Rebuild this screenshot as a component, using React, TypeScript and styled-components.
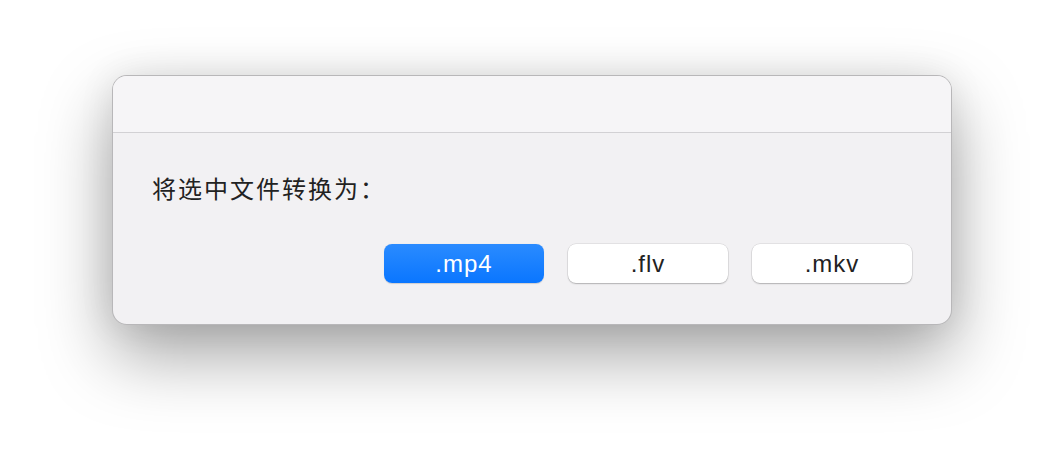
import styled, {createGlobalStyle} from 'styled-components'

const formats = ['.mp4', '.flv', '.mkv']

export default function App() {
  return (
    <>
      <GlobalStyle />
      <Page>
        <Dialog>
          <TitleBar />
          <Body>
            <Prompt>将选中文件转换为：</Prompt>
            <ButtonRow>
              {formats.map((f, i) => (
                <FormatButton key={f} $primary={i === 0}>
                  {f}
                </FormatButton>
              ))}
            </ButtonRow>
          </Body>
        </Dialog>
      </Page>
    </>
  )
}

const GlobalStyle = createGlobalStyle`
  html, body {
    margin: 0;
    padding: 0;
    background: #ffffff;
  }
  body {
    font-family: "Noto Sans", "Noto Sans CJK SC", sans-serif;
  }
`

const Page = styled.div`
  width: 1064px;
  height: 472px;
  display: flex;
  justify-content: center;
  align-items: flex-start;
  padding-top: 75px;
  box-sizing: border-box;
  overflow: hidden;
`

const Dialog = styled.div`
  width: 840px;
  height: 250px;
  box-sizing: border-box;
  border-radius: 15px;
  border: 1px solid rgba(0, 0, 0, 0.24);
  background: #f2f1f3;
  overflow: hidden;
  display: flex;
  flex-direction: column;
  box-shadow: 0 30px 70px rgba(0, 0, 0, 0.36), 0 0 36px rgba(0, 0, 0, 0.08);
`

const TitleBar = styled.div`
  height: 56px;
  flex: none;
  background: #f6f5f7;
  border-bottom: 1px solid #d2d1d4;
`

const Body = styled.div`
  flex: 1;
  display: flex;
  flex-direction: column;
  padding: 38px 39px 0 39px;
`

const Prompt = styled.div`
  font-family: "Noto Sans CJK SC", sans-serif;
  font-size: 24px;
  line-height: 34px;
  letter-spacing: 2px;
  color: #222222;
`

const ButtonRow = styled.div`
  display: flex;
  justify-content: flex-end;
  gap: 24px;
  margin-top: 39px;
`

const FormatButton = styled.button<{$primary?: boolean}>`
  width: 160px;
  height: 39px;
  border: none;
  border-radius: 8px;
  padding: 0;
  font-family: "Liberation Sans", Arial, sans-serif;
  font-size: 24px;
  letter-spacing: 1px;
  color: ${p => (p.$primary ? '#ffffff' : '#222222')};
  background: ${p =>
    p.$primary ? 'linear-gradient(#2a8bff, #0a76ff)' : '#ffffff'};
  box-shadow: ${p =>
    p.$primary
      ? '0 0.5px 1px rgba(0, 0, 0, 0.15)'
      : '0 0 0 0.5px rgba(0, 0, 0, 0.12), 0 1px 1.5px rgba(0, 0, 0, 0.22)'};
`
